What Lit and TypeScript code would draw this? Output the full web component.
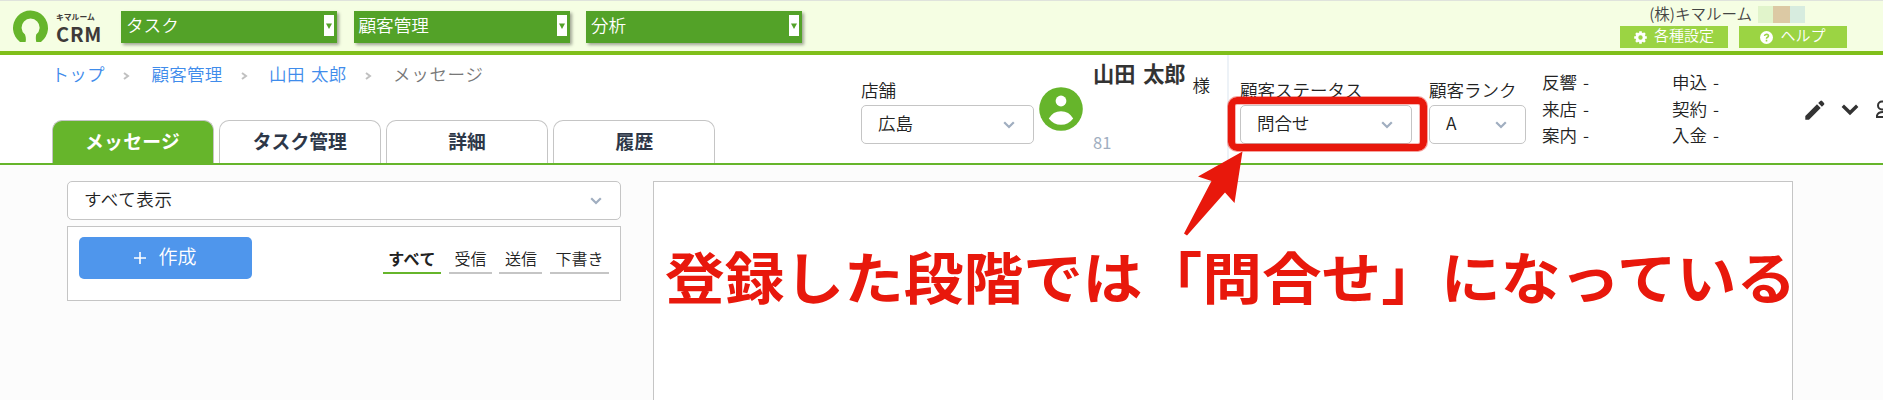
import { LitElement, css, html, svg } from 'lit';
import { customElement, property } from 'lit/decorators.js';

const FONT = css`'Noto Sans CJK JP', 'Noto Sans', sans-serif`;

@customElement('app-select')
export class AppSelect extends LitElement {
  @property({ type: String })
  value = '';

  render() {
    return html`
      <div class="select">
        <span class="value">${this.value}</span>
        <svg class="chevron" viewBox="0 0 12 8" width="12" height="8">
          <path d="M1.2 1.2 L6 6 L10.8 1.2" fill="none" stroke="#a0aec0" stroke-width="2.2" />
        </svg>
      </div>
    `;
  }

  static styles = css`
    :host {
      display: block;
    }

    .select {
      box-sizing: border-box;
      display: flex;
      align-items: center;
      justify-content: space-between;
      height: 39px;
      padding: 0 18px 0 16px;
      border: 1px solid #c5c5c5;
      border-radius: 5px;
      background: #fff;
      color: #222;
    }

    .value {
      line-height: 34px;
      height: 38px;
      white-space: nowrap;
    }
  `;
}

@customElement('app-header')
export class AppHeader extends LitElement {
  private menus = ['タスク', '顧客管理', '分析'];

  render() {
    return html`
      <header class="bar">
        <div class="logo">
          <svg width="36" height="33" viewBox="0 0 36 33">
            <path
              d="M7 32 A17.5 17.5 0 1 1 28 32 L23.3 32 Q22.4 28.4 23.2 24.6 A9 9 0 1 0 12 24.6 Q13.4 28.4 12.6 32 Z"
              fill="#66b52b"
            />
          </svg>
          <div class="brand">
            <span class="kana">キマルーム</span>
            <span class="crm">CRM</span>
          </div>
        </div>
        <nav class="menus">
          ${this.menus.map(
            (menu) => html`
              <div class="menu">
                <span>${menu}</span>
                <span class="drop">
                  <svg width="6" height="6" viewBox="0 0 6 6"><path d="M0 0.5 H6 L3 6 Z" fill="#53a228" /></svg>
                </span>
              </div>
            `
          )}
        </nav>
        <div class="account">
          <div class="company">
            <span>(株)キマルーム</span>
            <span class="mosaic"><i class="a"></i><i class="b"></i><i class="c"></i></span>
          </div>
          <div class="buttons">
            <div class="button">
              <svg width="13" height="13" viewBox="-6.5 -6.5 13 13">
                <circle r="3.6" fill="none" stroke="#fff" stroke-width="2.8" />
                ${[0, 45, 90, 135].map(
                  (angle) => svg`
                    <path d="M0 -6.3 V-4 M0 4 V6.3" stroke="#fff" stroke-width="2.6" transform="rotate(${angle})" />
                  `
                )}
              </svg>
              <span>各種設定</span>
            </div>
            <div class="button">
              <svg width="13" height="13" viewBox="0 0 13 13">
                <circle cx="6.5" cy="6.5" r="6.5" fill="#fff" />
                <path
                  d="M4.5 5 Q4.7 3.2 6.5 3.2 Q8.5 3.3 8.5 4.9 Q8.4 5.9 7.2 6.4 Q6.5 6.8 6.5 7.7 M6.5 8.8 V10.4"
                  fill="none"
                  stroke="#9bd443"
                  stroke-width="1.6"
                />
              </svg>
              <span>ヘルプ</span>
            </div>
          </div>
        </div>
      </header>
    `;
  }

  static styles = css`
    :host {
      display: block;
    }

    .bar {
      box-sizing: border-box;
      display: flex;
      height: 55px;
      border-top: 1px solid #dfe3dc;
      border-bottom: 4px solid #80bf1a;
      background: #f5fee3;
    }

    .logo {
      display: flex;
      width: 108px;
      padding: 9px 0 0 13px;
    }

    .brand {
      display: flex;
      flex-direction: column;
      padding-left: 7px;
      color: #3e3a39;
      font-weight: 700;
    }

    .kana {
      font-size: 7.8px;
      line-height: 13px;
      white-space: nowrap;
    }

    .crm {
      font-size: 20px;
      line-height: 21px;
      letter-spacing: 0.8px;
    }

    .menus {
      display: flex;
      gap: 16.5px;
      padding-top: 10px;
    }

    .menu {
      box-sizing: border-box;
      display: flex;
      justify-content: space-between;
      width: 216px;
      height: 32px;
      padding: 4px 3px 0 5px;
      background: #53a228;
      box-shadow: 2px 2px 3px rgba(0, 0, 0, 0.35);
      color: #fff;
      font-size: 17.6px;
      line-height: 20px;
    }

    .drop {
      display: flex;
      align-items: center;
      justify-content: center;
      width: 10px;
      height: 21px;
      background: #fff;
    }

    .account {
      display: flex;
      flex-direction: column;
      margin-left: auto;
      padding: 5px 36px 0 0;
    }

    .company {
      display: flex;
      justify-content: flex-end;
      gap: 6px;
      height: 20px;
      padding-right: 42px;
      color: #444;
      font-size: 15.5px;
      line-height: 15px;
    }

    .mosaic {
      display: flex;
    }

    .mosaic i {
      width: 15px;
      height: 17px;
    }

    .mosaic .a {
      background: #e1f4cb;
    }

    .mosaic .b {
      width: 17px;
      background: #dcc9a4;
    }

    .mosaic .c {
      background: #d7ecdf;
    }

    .buttons {
      display: flex;
      gap: 11px;
    }

    .button {
      display: flex;
      align-items: center;
      justify-content: center;
      gap: 7px;
      width: 108px;
      height: 22px;
      background: #9bd443;
      color: #fff;
      font-size: 15px;
      line-height: 16px;
    }

    .button span {
      height: 21px;
    }
  `;
}

@customElement('customer-bar')
export class CustomerBar extends LitElement {
  private crumbs = ['トップ', '顧客管理', '山田 太郎'];
  private tabs = ['メッセージ', 'タスク管理', '詳細', '履歴'];
  private stats = ['反響', '申込', '来店', '契約', '案内', '入金'];

  render() {
    return html`
      <section class="bar">
        <div class="left">
          <div class="crumbs">
            ${this.crumbs.map(
              (crumb) => html`
                <a>${crumb}</a>
                <svg width="7" height="8" viewBox="0 0 7 8">
                  <path d="M1 1 L5 4 L1 7" fill="none" stroke="#c0c0c0" stroke-width="2" />
                </svg>
              `
            )}
            <span>メッセージ</span>
          </div>
          <div class="tabs">
            ${this.tabs.map((tab, i) => html`<div class="tab ${i === 0 ? 'active' : ''}">${tab}</div>`)}
          </div>
        </div>
        <div class="field store">
          <label>店舗</label>
          <app-select value="広島"></app-select>
        </div>
        <svg class="avatar" width="44" height="44" viewBox="0 0 44 44">
          <circle cx="22" cy="22" r="21.8" fill="#66b52b" />
          <circle cx="22" cy="14" r="5.4" fill="#fff" />
          <path d="M9.8 31.5 Q14 24.2 22 24.2 Q30 24.2 34.2 31.5 Q29.5 37.8 22 37.8 Q14.5 37.8 9.8 31.5 Z" fill="#fff" />
        </svg>
        <div class="customer">
          <div class="name"><b>山田 太郎</b><span>様</span></div>
          <div class="id">81</div>
        </div>
        <div class="field status">
          <label>顧客ステータス</label>
          <app-select value="問合せ"></app-select>
        </div>
        <div class="field rank">
          <label>顧客ランク</label>
          <app-select value="A"></app-select>
        </div>
        <div class="stats">${this.stats.map((stat) => html`<span>${stat} -</span>`)}</div>
        <div class="tools">
          <svg width="20" height="20" viewBox="0 0 20 20" fill="#333">
            <path d="M0.3 19.7 V16 L12 4.3 L15.7 8 L4 19.7 Z M13.2 3.1 L15.3 1 Q16.2 0.2 17.1 1 L19 2.9 Q19.8 3.8 19 4.7 L16.9 6.8 Z" />
          </svg>
          <svg width="18" height="12" viewBox="0 0 18 12">
            <path d="M1.8 1.8 L9 8.8 L16.2 1.8" fill="none" stroke="#333" stroke-width="3.4" />
          </svg>
          <svg class="person" width="20" height="20" viewBox="0 0 20 20" fill="none" stroke="#333" stroke-width="2">
            <circle cx="7" cy="5.5" r="4" />
            <path d="M2 17 V15.5 Q3 12 8 12 H13 V17 Z" />
          </svg>
        </div>
      </section>
    `;
  }

  static styles = css`
    :host {
      display: block;
    }

    .bar {
      box-sizing: border-box;
      display: flex;
      height: 110px;
      overflow: hidden;
      border-bottom: 2px solid #66b52b;
      background: #fff;
      color: #222;
      font-size: 17.5px;
    }

    .left {
      box-sizing: border-box;
      display: flex;
      flex: none;
      flex-direction: column;
      justify-content: space-between;
      width: 861px;
      padding-left: 51.5px;
    }

    .crumbs {
      display: flex;
      align-items: center;
      height: 37px;
      color: #777;
      letter-spacing: 0.3px;
      word-spacing: 2px;
      white-space: nowrap;
    }

    .crumbs a {
      color: #3f8ceb;
    }

    .crumbs svg {
      margin: 5px 21px 0 18.5px;
    }

    .crumbs span {
      letter-spacing: 0.7px;
    }

    .tabs {
      display: flex;
      gap: 5.3px;
    }

    .tab {
      box-sizing: border-box;
      width: 162px;
      height: 43px;
      border: 1px solid #c5c5c5;
      border-bottom: 0;
      border-radius: 10px 10px 0 0;
      color: #2d3748;
      font-size: 18.8px;
      font-weight: 700;
      line-height: 39px;
      text-align: center;
    }

    .tab.active {
      background: #66b52b;
      color: #fff;
      letter-spacing: 0.3px;
    }

    .field {
      display: flex;
      flex: none;
      flex-direction: column;
      padding-top: 24px;
    }

    .field label {
      height: 26px;
      line-height: 22px;
      white-space: nowrap;
    }

    .store {
      width: 173px;
    }

    .avatar {
      flex: none;
      margin: 32px 10px 0 5px;
    }

    .customer {
      box-sizing: border-box;
      display: flex;
      flex: none;
      flex-direction: column;
      justify-content: space-between;
      width: 136px;
      padding: 3px 0 9px;
      border-right: 2px solid #edf2f7;
    }

    .name {
      display: flex;
      gap: 7px;
      white-space: nowrap;
    }

    .name b {
      color: #333;
      font-size: 21.2px;
      font-weight: 700;
      line-height: 30px;
      word-spacing: 3px;
    }

    .name span {
      padding-top: 13px;
      line-height: 28px;
    }

    .id {
      color: #a0aec0;
      font-size: 16.5px;
      font-weight: 400;
      line-height: 24px;
    }

    .status {
      width: 172px;
      margin-left: 11px;
    }

    .rank {
      width: 97px;
      margin-left: 17px;
    }

    .stats {
      display: grid;
      flex: none;
      grid-template-columns: 130px 130px;
      grid-auto-rows: 26.5px;
      padding: 14px 0 0 16px;
      line-height: 26px;
      word-spacing: 2px;
    }

    .tools {
      display: flex;
      flex: none;
      align-items: center;
      gap: 16px;
      padding-left: 3px;
      padding-top: 2px;
    }
  `;
}

@customElement('message-list')
export class MessageList extends LitElement {
  private filters = ['すべて', '受信', '送信', '下書き'];

  render() {
    return html`
      <app-select class="kind" value="すべて表示"></app-select>
      <div class="card">
        <div class="create">
          <svg width="12" height="12" viewBox="0 0 12 12"><path d="M6 0 V12 M0 6 H12" stroke="#fff" stroke-width="1.6" /></svg>
          <span>作成</span>
        </div>
        <div class="filters">
          ${this.filters.map((label, i) => html`<span class="filter ${i === 0 ? 'active' : ''}">${label}</span>`)}
        </div>
      </div>
    `;
  }

  static styles = css`
    :host {
      display: block;
      color: #222;
      font-size: 17.5px;
    }

    .kind {
      letter-spacing: 0.6px;
    }

    .card {
      box-sizing: border-box;
      display: flex;
      justify-content: space-between;
      height: 75px;
      margin-top: 6px;
      padding: 10px 11px;
      border: 1px solid #c5c5c5;
      background: #fff;
    }

    .create {
      display: flex;
      align-items: center;
      justify-content: center;
      gap: 12px;
      width: 173px;
      height: 42px;
      border-radius: 5px;
      background: #4f96ec;
      color: #fff;
      font-size: 19px;
      line-height: 24px;
    }

    .create span {
      height: 29px;
    }

    .filters {
      display: flex;
      gap: 7.5px;
      padding-top: 10px;
    }

    .filter {
      height: 25px;
      padding: 0 5.5px;
      border-bottom: 2px solid #c5c5c5;
      font-size: 16px;
      line-height: 22px;
    }

    .filter.active {
      border-color: #66b52b;
      font-weight: 700;
      letter-spacing: 0.5px;
    }
  `;
}

@customElement('app-root')
export class AppRoot extends LitElement {
  render() {
    return html`
      <app-header></app-header>
      <customer-bar></customer-bar>
      <main class="content">
        <message-list class="list"></message-list>
        <div class="detail"></div>
      </main>
      <div class="highlight"></div>
      <svg class="arrow" width="60" height="86" viewBox="0 0 60 86">
        <path d="M59.5 0.5 L51.5 52 L42 41.5 L4 84.5 L1 82.5 L28.5 30 L15 25.5 Z" fill="#e8180c" />
      </svg>
      <div class="note">登録した段階では「問合せ」になっている</div>
    `;
  }

  static styles = css`
    :host {
      position: relative;
      display: flex;
      flex-direction: column;
      height: 400px;
      overflow: hidden;
      background: #fcfcfc;
      font-family: ${FONT};
      font-weight: 350;
    }

    .content {
      display: flex;
      flex: 1;
      gap: 32px;
      padding: 16px 90px 0 67px;
    }

    .list {
      flex: none;
      width: 554px;
    }

    .detail {
      flex: 1;
      border: 1px solid #c5c5c5;
      border-bottom: 0;
      background: #fff;
    }

    .highlight {
      position: absolute;
      top: 97px;
      left: 1228px;
      box-sizing: border-box;
      width: 199px;
      height: 54px;
      border: 7px solid #e8180c;
      border-radius: 9px;
      box-shadow:
        0 0 0 1px rgba(232, 24, 12, 0.4),
        inset 0 0 0 1px rgba(232, 24, 12, 0.3);
    }

    .arrow {
      position: absolute;
      top: 151px;
      left: 1183px;
    }

    .note {
      position: absolute;
      top: 235px;
      left: 665px;
      color: #e8180c;
      font-size: 59.7px;
      font-weight: 700;
      line-height: 80px;
      white-space: nowrap;
      text-shadow: 0 0 2px #fff;
      transform: scaleY(0.94);
    }
  `;
}

declare global {
  interface HTMLElementTagNameMap {
    'app-select': AppSelect;
    'app-header': AppHeader;
    'customer-bar': CustomerBar;
    'message-list': MessageList;
    'app-root': AppRoot;
  }
}
